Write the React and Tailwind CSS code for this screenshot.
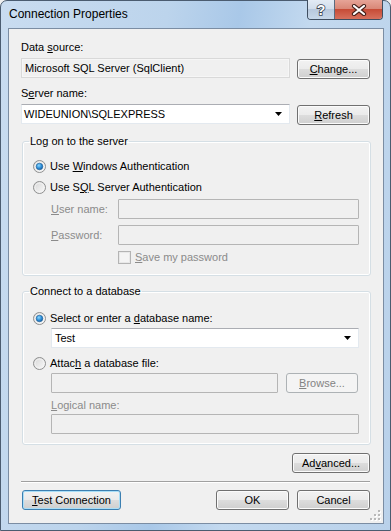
import React from "react";

const btnBase =
  "h-[20px] flex items-center justify-center rounded-[3px] border text-[11px] leading-[13px]";
const btnNormal =
  "border-[#707070] text-black bg-[linear-gradient(#f2f2f2,#ebebeb_50%,#dddddd_50%,#cfcfcf)] shadow-[inset_0_0_0_1px_#fbfbfb]";
const btnFocused =
  "border-[#3c7fb1] text-black bg-[linear-gradient(#f2f2f2,#ebebeb_50%,#dddddd_50%,#cfcfcf)] shadow-[inset_0_0_0_1px_#a9def7]";
const btnDisabled = "border-[#adb2b5] text-[#838383] bg-[#f4f4f4]";

function Btn({ children, className = "", disabled, focused }) {
  const look = disabled ? btnDisabled : focused ? btnFocused : btnNormal;
  return <div className={`${btnBase} ${look} ${className}`}>{children}</div>;
}

function Radio({ checked }) {
  return (
    <svg width="13" height="13" viewBox="0 0 13 13" className="shrink-0">
      <defs>
        <linearGradient id="rbg" x1="0" y1="0" x2="1" y2="1">
          <stop offset="0" stopColor="#d5d5d5" />
          <stop offset="1" stopColor="#fbfbfb" />
        </linearGradient>
        <radialGradient id="rdot" cx="0.4" cy="0.35" r="0.7">
          <stop offset="0" stopColor="#8ad7ff" />
          <stop offset="0.6" stopColor="#2a8ad4" />
          <stop offset="1" stopColor="#1a5c99" />
        </radialGradient>
      </defs>
      <circle cx="6.5" cy="6.5" r="6" fill="url(#rbg)" stroke="#8e8f8f" />
      <circle cx="6.5" cy="6.5" r="4.5" fill="none" stroke="#f4f4f4" strokeWidth="0.8" />
      {checked && <circle cx="6.5" cy="6.5" r="3.3" fill="url(#rdot)" stroke="#1d5f9b" strokeWidth="0.6" />}
    </svg>
  );
}

function Arrow() {
  return (
    <svg width="7" height="4" viewBox="0 0 7 4" className="shrink-0">
      <polygon points="0,0 7,0 3.5,4" fill="#000" />
    </svg>
  );
}

function Combo({ value, className = "" }) {
  return (
    <div
      className={`h-[20px] flex items-center bg-white border border-[#e3e9ef] border-t-[#abadb3] pl-[2px] pr-[7px] ${className}`}
    >
      <span className="flex-1 text-black">{value}</span>
      <Arrow />
    </div>
  );
}

function DisabledBox({ className = "" }) {
  return <div className={`h-[20px] border border-[#b5b5b5] bg-[#f0f0f0] rounded-[1px] ${className}`} />;
}

function Group({ title, children }) {
  return (
    <fieldset className="ml-[1px] w-[349px] border border-[#d5dfe5] rounded-[3px] shadow-[inset_0_0_0_1px_#ffffff] p-0">
      <legend className="ml-[6px] px-[1px] leading-[13px] text-black">{title}</legend>
      {children}
    </fieldset>
  );
}

function Grip() {
  const dots = [
    [8, 0],
    [8, 4],
    [4, 4],
    [8, 8],
    [4, 8],
    [0, 8],
  ];
  return (
    <svg width="11" height="11" viewBox="0 0 11 11" className="absolute right-[2px] bottom-[2px]">
      {dots.map(([x, y], i) => (
        <g key={i}>
          <rect x={x + 1} y={y + 1} width="2" height="2" fill="#ffffff" />
          <rect x={x} y={y} width="2" height="2" fill="#b8b8b8" />
        </g>
      ))}
    </svg>
  );
}

export default function App() {
  return (
    <div className="w-[391px] h-[531px] overflow-hidden bg-[#f0f0f0]">
      <div className="w-[391px] h-[531px] flex flex-col rounded-t-[7px] border border-[#4b5c70] bg-[linear-gradient(100deg,#c9dcf0_0%,#bcd4ec_35%,#a9c8e8_50%,#c3d9ef_65%,#b9d1ea_100%)] font-['Liberation_Sans',Arial,sans-serif] text-[11px] text-black">
        {/* title bar */}
        <div className="h-[27px] flex shrink-0">
          <div className="pl-[8px] pt-[6px] text-[12px] leading-[15px] text-black">Connection Properties</div>
          <div className="ml-auto mr-[7px] -mt-[1px] h-[20px] flex rounded-b-[4px] border border-t-0 border-[#3f4e60] overflow-hidden">
            <div className="w-[27px] h-full flex items-center justify-center border-r border-[#5b6b7f] bg-[linear-gradient(#e3ebf5,#d2deec_45%,#b8c9dd_50%,#c7d8ea)]">
              <svg width="14" height="14" viewBox="0 0 14 14">
                <text
                  x="7"
                  y="12"
                  textAnchor="middle"
                  fontFamily="Liberation Sans, Arial, sans-serif"
                  fontWeight="bold"
                  fontSize="14"
                  fill="#ffffff"
                  stroke="#3b4654"
                  strokeWidth="1.6"
                  paintOrder="stroke"
                >
                  ?
                </text>
              </svg>
            </div>
            <div className="w-[47px] h-full flex items-center justify-center bg-[linear-gradient(#e6a497,#d98878_45%,#c74c37_50%,#d7705d)]">
              <svg width="16" height="12" viewBox="0 0 16 12">
                <path d="M3 2 L13 10 M13 2 L3 10" stroke="#45201a" strokeWidth="4.2" strokeLinecap="round" />
                <path d="M3 2 L13 10 M13 2 L3 10" stroke="#ffffff" strokeWidth="2.2" strokeLinecap="round" />
              </svg>
            </div>
          </div>
        </div>

        {/* client area */}
        <div className="relative ml-[7px] w-[376px] h-[496px] border border-[#7b8da3] bg-[#f0f0f0] flex flex-col pl-[12px] pr-[13px]">
          <div className="mt-[12px] leading-[13px]">
            Data <u>s</u>ource:
          </div>
          <div className="mt-[4px] flex gap-[7px]">
            <div className="w-[269px] h-[20px] flex items-center pl-[3px] border border-[#d9d9d9] bg-[#f0f0f0] shadow-[inset_0_0_0_1px_#f6f6f6]">
              Microsoft SQL Server (SqlClient)
            </div>
            <Btn className="w-[73px] mt-[1px]">
              <span>
                <u>C</u>hange...
              </span>
            </Btn>
          </div>

          <div className="mt-[8px] leading-[13px]">
            S<u>e</u>rver name:
          </div>
          <div className="mt-[4px] flex gap-[7px]">
            <Combo value="WIDEUNION\SQLEXPRESS" className="w-[269px]" />
            <Btn className="w-[73px] mt-[1px]">
              <span>
                <u>R</u>efresh
              </span>
            </Btn>
          </div>

          <div className="mt-[10px]">
            <Group title="Log on to the server">
              <div className="pl-[10px] pb-[11px] flex flex-col">
                <div className="mt-[12px] h-[13px] flex items-center gap-[4px] leading-[13px]">
                  <Radio checked />
                  <span>
                    Use <u>W</u>indows Authentication
                  </span>
                </div>
                <div className="mt-[8px] h-[13px] flex items-center gap-[4px] leading-[13px]">
                  <Radio />
                  <span>
                    Use S<u>Q</u>L Server Authentication
                  </span>
                </div>
                <div className="mt-[5px] pl-[18px] flex items-center text-[#8b8b8b]">
                  <span className="w-[67px]">
                    <u>U</u>ser name:
                  </span>
                  <DisabledBox className="w-[241px]" />
                </div>
                <div className="mt-[6px] pl-[18px] flex items-center text-[#8b8b8b]">
                  <span className="w-[67px]">
                    <u>P</u>assword:
                  </span>
                  <DisabledBox className="w-[241px]" />
                </div>
                <div className="mt-[6px] pl-[85px] flex items-center gap-[4px] text-[#8b8b8b] leading-[13px]">
                  <div className="w-[13px] h-[13px] border border-[#b4b4b4] bg-[#f4f4f4] shadow-[inset_0_0_0_1px_#e8e8e8]" />
                  <span>
                    <u>S</u>ave my password
                  </span>
                </div>
              </div>
            </Group>
          </div>

          <div className="mt-[9px]">
            <Group title="Connect to a database">
              <div className="pl-[10px] pb-[10px] flex flex-col">
                <div className="mt-[14px] h-[13px] flex items-center gap-[4px] leading-[13px]">
                  <Radio checked />
                  <span>
                    Select or enter a <u>d</u>atabase name:
                  </span>
                </div>
                <div className="mt-[3px] pl-[18px]">
                  <Combo value="Test" className="w-[308px] pl-[3px]" />
                </div>
                <div className="mt-[9px] h-[13px] flex items-center gap-[4px] leading-[13px]">
                  <Radio />
                  <span>
                    Attac<u>h</u> a database file:
                  </span>
                </div>
                <div className="mt-[3px] pl-[18px] flex gap-[8px]">
                  <DisabledBox className="w-[227px]" />
                  <Btn disabled className="w-[72px]">
                    <span>
                      <u>B</u>rowse...
                    </span>
                  </Btn>
                </div>
                <div className="mt-[6px] pl-[18px] leading-[13px] text-[#8b8b8b]">
                  <u>L</u>ogical name:
                </div>
                <div className="mt-[2px] pl-[18px]">
                  <DisabledBox className="w-[308px]" />
                </div>
              </div>
            </Group>
          </div>

          <div className="mt-[8px] flex justify-end">
            <Btn className="w-[78px]">
              <span>
                Ad<u>v</u>anced...
              </span>
            </Btn>
          </div>

          <div className="mt-[8px] h-[2px] border-t border-[#a0a0a0] border-b border-b-white" />

          <div className="mt-[7px] flex">
            <Btn focused className="ml-[1px] w-[99px]">
              <span>
                <u>T</u>est Connection
              </span>
            </Btn>
            <Btn className="ml-auto w-[73px]">OK</Btn>
            <Btn className="ml-[8px] w-[73px]">Cancel</Btn>
          </div>

          <Grip />
        </div>
      </div>
    </div>
  );
}
